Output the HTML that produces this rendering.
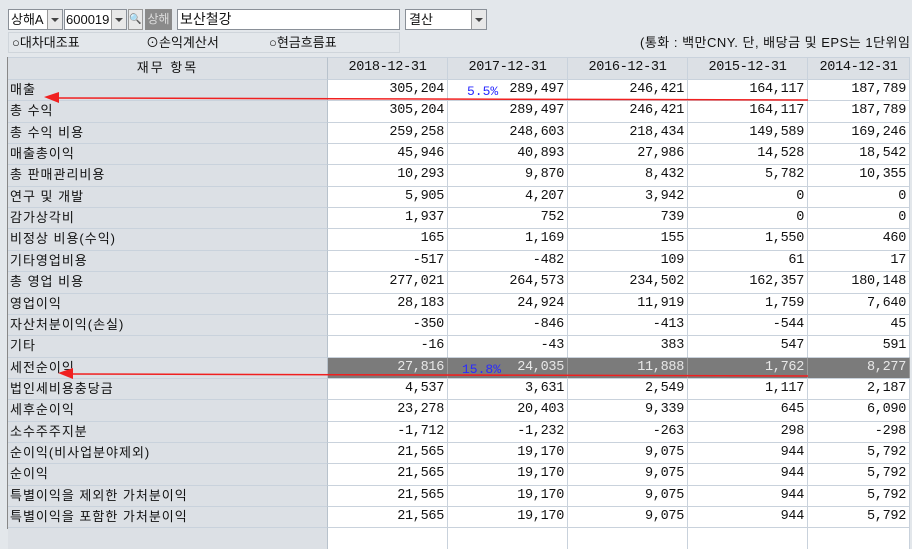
<!DOCTYPE html>
<html><head><meta charset="utf-8"><style>
body{margin:0;width:912px;height:529px;overflow:hidden;background:#e3e7eb;font-family:"Liberation Sans","Noto Sans CJK KR","NanumGothic",sans-serif;font-size:13px;color:#111;position:relative}
.a{position:absolute;box-sizing:border-box}
.box{background:#fff;border:1px solid #8a9098}
.r{position:absolute;left:8px;width:902px;height:22px}
.r div{position:absolute;top:0;height:22px;line-height:20px;box-sizing:border-box;text-align:right;padding-right:3px;border-right:1px solid #c9d2dc;border-top:1px solid #c9d2dc;background:#fff;font-family:"Liberation Mono","Noto Sans CJK KR",monospace;font-size:13.5px;letter-spacing:-0.3px}
.r .l{left:0;width:320px;text-align:left;padding-left:2px;background:#dce0e5;border-right:1px solid #b8c2cc;letter-spacing:1px;font-family:"Liberation Sans","Noto Sans CJK KR",sans-serif;font-size:13px}
.r .c1{left:320px;width:120px}.r .c2{left:440px;width:120px}.r .c3{left:560px;width:120px}.r .c4{left:680px;width:120px}.r .c5{left:800px;width:102px}
.h div{background:#dce0e5;text-align:center;padding:0}
.dk div.c1,.dk div.c2,.dk div.c3,.dk div.c4,.dk div.c5{background:#7b7b7b;color:#e8e8e8;border-right:1px solid #9a9a9a}
.dd{position:absolute;top:0;width:14px;height:19px;background:#e8e8e8;border-left:1px solid #999}
.dd:after{content:"";position:absolute;left:3px;top:8px;border:4px solid transparent;border-top:4px solid #444}
</style></head><body>
<div class="a box" style="left:8px;top:9px;width:55px;height:21px;line-height:19px;padding-left:2px">상해A<span class="dd" style="right:0"></span></div>
<div class="a box" style="left:64px;top:9px;width:63px;height:21px;line-height:19px;padding-left:1px">600019<span class="dd" style="right:0"></span></div>
<div class="a" style="left:128px;top:9px;width:15px;height:21px;background:#e8e8e8;border:1px solid #999;font-size:10px;line-height:19px;text-align:center">🔍</div>
<div class="a" style="left:145px;top:9px;width:27px;height:21px;background:#8a8a8a;color:#ddd;font-size:12px;line-height:21px;text-align:center">상해</div>
<div class="a box" style="left:177px;top:9px;width:223px;height:21px;line-height:19px;padding-left:2px;font-size:14px">보산철강</div>
<div class="a box" style="left:405px;top:9px;width:82px;height:21px;line-height:19px;padding-left:3px">결산<span class="dd" style="right:0"></span></div>
<div class="a" style="left:8px;top:32px;width:392px;height:21px;border:1px solid #cfd5db;line-height:20px">
<span class="a" style="left:3px">○대차대조표</span><span class="a" style="left:137px">⊙손익계산서</span><span class="a" style="left:260px">○현금흐름표</span></div>
<div class="a" style="left:640px;top:34px;white-space:nowrap;line-height:18px;letter-spacing:0.5px">(통화 : 백만CNY. 단, 배당금 및 EPS는 1단위임</div>
<div class="r h" style="top:57px"><div class="l" style="text-align:center;padding:0;letter-spacing:2px">재무 항목</div><div class="c1">2018-12-31</div><div class="c2">2017-12-31</div><div class="c3">2016-12-31</div><div class="c4">2015-12-31</div><div class="c5">2014-12-31</div></div>
<div class="r" style="top:79px"><div class="l">매출</div><div class="c1">305,204</div><div class="c2">289,497</div><div class="c3">246,421</div><div class="c4">164,117</div><div class="c5">187,789</div></div>
<div class="r" style="top:100px"><div class="l">총 수익</div><div class="c1">305,204</div><div class="c2">289,497</div><div class="c3">246,421</div><div class="c4">164,117</div><div class="c5">187,789</div></div>
<div class="r" style="top:122px"><div class="l">총 수익 비용</div><div class="c1">259,258</div><div class="c2">248,603</div><div class="c3">218,434</div><div class="c4">149,589</div><div class="c5">169,246</div></div>
<div class="r" style="top:143px"><div class="l">매출총이익</div><div class="c1">45,946</div><div class="c2">40,893</div><div class="c3">27,986</div><div class="c4">14,528</div><div class="c5">18,542</div></div>
<div class="r" style="top:164px"><div class="l">총 판매관리비용</div><div class="c1">10,293</div><div class="c2">9,870</div><div class="c3">8,432</div><div class="c4">5,782</div><div class="c5">10,355</div></div>
<div class="r" style="top:186px"><div class="l">연구 및 개발</div><div class="c1">5,905</div><div class="c2">4,207</div><div class="c3">3,942</div><div class="c4">0</div><div class="c5">0</div></div>
<div class="r" style="top:207px"><div class="l">감가상각비</div><div class="c1">1,937</div><div class="c2">752</div><div class="c3">739</div><div class="c4">0</div><div class="c5">0</div></div>
<div class="r" style="top:228px"><div class="l">비정상 비용(수익)</div><div class="c1">165</div><div class="c2">1,169</div><div class="c3">155</div><div class="c4">1,550</div><div class="c5">460</div></div>
<div class="r" style="top:250px"><div class="l">기타영업비용</div><div class="c1">-517</div><div class="c2">-482</div><div class="c3">109</div><div class="c4">61</div><div class="c5">17</div></div>
<div class="r" style="top:271px"><div class="l">총 영업 비용</div><div class="c1">277,021</div><div class="c2">264,573</div><div class="c3">234,502</div><div class="c4">162,357</div><div class="c5">180,148</div></div>
<div class="r" style="top:293px"><div class="l">영업이익</div><div class="c1">28,183</div><div class="c2">24,924</div><div class="c3">11,919</div><div class="c4">1,759</div><div class="c5">7,640</div></div>
<div class="r" style="top:314px"><div class="l">자산처분이익(손실)</div><div class="c1">-350</div><div class="c2">-846</div><div class="c3">-413</div><div class="c4">-544</div><div class="c5">45</div></div>
<div class="r" style="top:335px"><div class="l">기타</div><div class="c1">-16</div><div class="c2">-43</div><div class="c3">383</div><div class="c4">547</div><div class="c5">591</div></div>
<div class="r dk" style="top:357px"><div class="l">세전순이익</div><div class="c1">27,816</div><div class="c2">24,035</div><div class="c3">11,888</div><div class="c4">1,762</div><div class="c5">8,277</div></div>
<div class="r" style="top:378px"><div class="l">법인세비용충당금</div><div class="c1">4,537</div><div class="c2">3,631</div><div class="c3">2,549</div><div class="c4">1,117</div><div class="c5">2,187</div></div>
<div class="r" style="top:399px"><div class="l">세후순이익</div><div class="c1">23,278</div><div class="c2">20,403</div><div class="c3">9,339</div><div class="c4">645</div><div class="c5">6,090</div></div>
<div class="r" style="top:421px"><div class="l">소수주주지분</div><div class="c1">-1,712</div><div class="c2">-1,232</div><div class="c3">-263</div><div class="c4">298</div><div class="c5">-298</div></div>
<div class="r" style="top:442px"><div class="l">순이익(비사업분야제외)</div><div class="c1">21,565</div><div class="c2">19,170</div><div class="c3">9,075</div><div class="c4">944</div><div class="c5">5,792</div></div>
<div class="r" style="top:463px"><div class="l">순이익</div><div class="c1">21,565</div><div class="c2">19,170</div><div class="c3">9,075</div><div class="c4">944</div><div class="c5">5,792</div></div>
<div class="r" style="top:485px"><div class="l">특별이익을 제외한 가처분이익</div><div class="c1">21,565</div><div class="c2">19,170</div><div class="c3">9,075</div><div class="c4">944</div><div class="c5">5,792</div></div>
<div class="r" style="top:506px"><div class="l">특별이익을 포함한 가처분이익</div><div class="c1">21,565</div><div class="c2">19,170</div><div class="c3">9,075</div><div class="c4">944</div><div class="c5">5,792</div></div>
<div class="r" style="top:527px"><div class="l"></div><div class="c1"></div><div class="c2"></div><div class="c3"></div><div class="c4"></div><div class="c5"></div></div>
<div class="a" style="left:7px;top:57px;width:1px;height:472px;background:#888"></div>
<div class="a" style="left:467px;top:84px;color:#2a2aff;font-size:13px;font-family:'Liberation Mono',monospace">5.5%</div>
<div class="a" style="left:462px;top:362px;color:#2a2aff;font-size:13px;font-family:'Liberation Mono',monospace">15.8%</div>
<svg class="a" style="left:0;top:0" width="912" height="529">
<line x1="58" y1="98" x2="808" y2="100" stroke="#f02020" stroke-width="1.5"/>
<polygon points="44,97 59,92 59,103" fill="#f02020"/>
<line x1="72" y1="374" x2="808" y2="376" stroke="#f02020" stroke-width="1.5"/>
<polygon points="58,373 73,368 73,379" fill="#f02020"/>
</svg>
</body></html>
